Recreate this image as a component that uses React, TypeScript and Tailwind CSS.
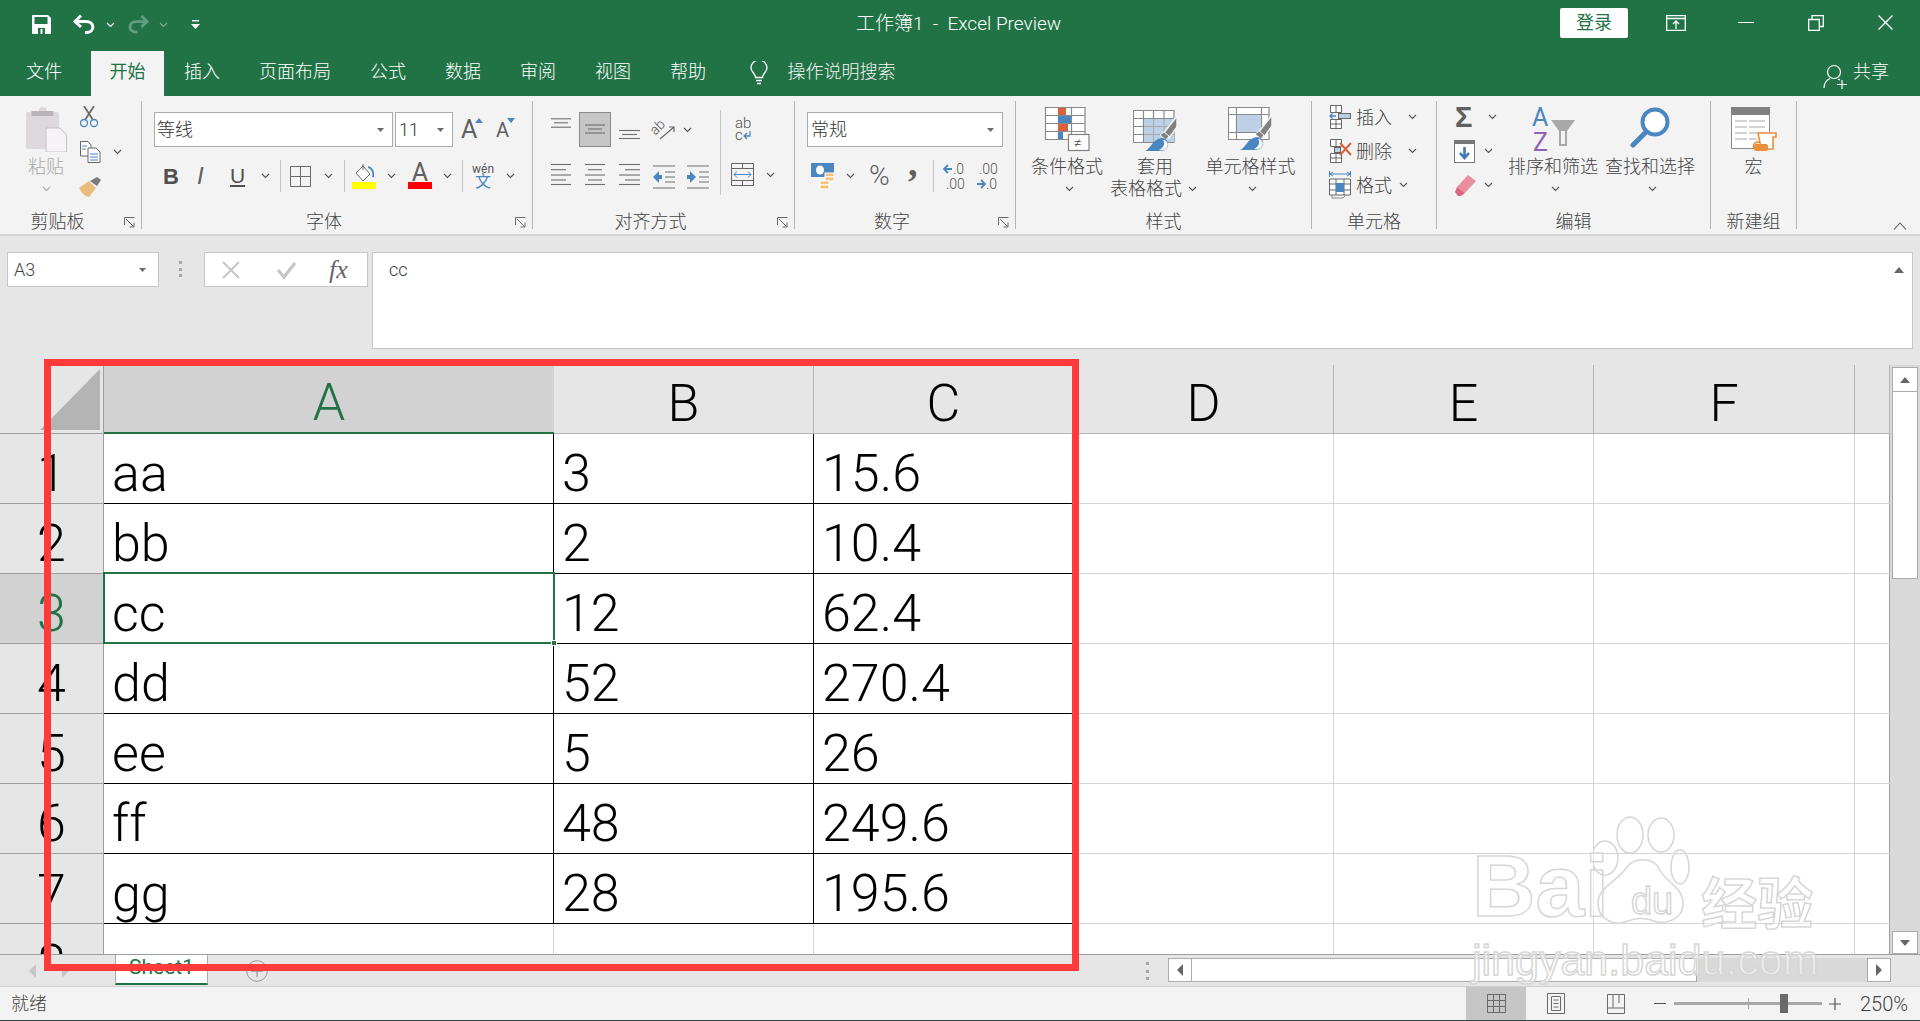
import React from "react";

const Chev = ({ c = "#555", className = "" }: { c?: string; className?: string }) => (
  <svg width="9" height="6" viewBox="0 0 9 6" className={`shrink-0 ${className}`}><polyline points="1,1 4.5,4.5 8,1" fill="none" stroke={c} strokeWidth="1.1" /></svg>
);
const Drop = () => (
  <svg width="9" height="6" viewBox="0 0 9 6" className="shrink-0"><polygon points="1,1 8,1 4.5,5" fill="#6a6a6a" /></svg>
);
const Launcher = () => (
  <svg width="11" height="11" viewBox="0 0 11 11" className="absolute right-[6px] bottom-[1px]">
    <path d="M0.5 8V0.5H10.5M2 2L9.5 9.5M5.5 10H10V5.5" fill="none" stroke="#6a6a6a" strokeWidth="1" />
  </svg>
);
const Sep = () => <div className="w-px h-[32px] bg-[#c6c6c6] shrink-0" />;

function Group({ w, label, launcher, children }: { w: string; label: string; launcher?: boolean; children: React.ReactNode }) {
  return (
    <div className={`${w} shrink-0 relative h-[128px] mt-[5px] border-r border-[#b4b4b4] flex flex-col`}>
      <div className="h-[110px] shrink-0">{children}</div>
      <div className={`h-[18px] leading-[22px] text-center text-[#444] ${launcher ? "pr-[26px]" : ""}`}>{label}</div>
      {launcher && <Launcher />}
    </div>
  );
}

const Lines = ({ w = 20, ys, xs }: { w?: number; ys: number[]; xs?: [number, number][] }) => (
  <svg width={w} height="32" viewBox={`0 0 ${w} 32`} className="shrink-0">
    {ys.map((y, i) => (
      <line key={i} x1={xs ? xs[i][0] : 0} x2={xs ? xs[i][1] : w} y1={y} y2={y} stroke="#6e6e6e" strokeWidth="1.1" />
    ))}
  </svg>
);

const SmallCol = ({ className, icon, label, label2, chev = true, labelClass = "" }: { className: string; icon: React.ReactNode; label: string; label2?: React.ReactNode; chev?: boolean; labelClass?: string }) => (
  <div className={`${className} shrink-0 flex flex-col items-center`}>
    <div className="h-[45px] mt-[6px] flex items-start">{icon}</div>
    <div className={`mt-[4px] h-[22px] leading-[22px] whitespace-nowrap text-[#444] ${labelClass}`}>{label}</div>
    {label2}
    {chev && !label2 && <Chev className="mt-[8px] ml-[4px]" />}
  </div>
);

const RowsCol = ({ children }: { children: React.ReactNode }) => <div className="flex flex-col">{children}</div>;

const Brush = ({ dx = 0, dy = 0 }: { dx?: number; dy?: number }) => (
  <g transform={`translate(${dx} ${dy})`}>
    <path d="M30 27L44 9V20L36 31Z" fill="#808080" stroke="#f3f3f3" strokeWidth="1.500" />
    <path d="M27 28L31 25 36 29 33 33Z" fill="#808080" stroke="#f3f3f3" />
    <path d="M12 44C18 42 19 32 29 31 33 31 36 35 35 39 33 43 30 44 26 44Z" fill="#4a86c0" />
    <path d="M26 43C30 41 33 37 30 33 34 33 36 37 34 40 33 42 30 44 26 43Z" fill="#fff" />
  </g>
);

const grid = ["aa", "bb", "cc", "dd", "ee", "ff", "gg"];
const b = ["3", "2", "12", "52", "5", "48", "28"];
const c = ["15.6", "10.4", "62.4", "270.4", "26", "249.6", "195.6"];

const cellText = "pl-[8px] pb-[3px] flex items-end leading-[52px] text-[52px] font-light text-black overflow-hidden";

export default function App() {
  return (
    <div className="relative w-[1920px] h-[1021px] overflow-hidden bg-[#e6e6e6] flex flex-col text-[18px] font-light font-['Roboto','Noto_Sans_CJK_SC',sans-serif]">
      {/* title bar */}
      <div className="h-[51px] shrink-0 bg-[#217346] flex items-center text-white relative">
        <svg width="19" height="19" viewBox="0 0 19 19" className="ml-[32px] -mt-[3px]">
          <path d="M1 0H16L19 3V18a1 1 0 0 1-1 1H1a1 1 0 0 1-1-1V1a1 1 0 0 1 1-1Z" fill="#fff" />
          <rect x="2.500" y="2" width="13" height="7" fill="#217346" />
          <rect x="6" y="13" width="7" height="6" fill="#217346" />
          <rect x="8.500" y="14" width="2" height="5" fill="#fff" />
        </svg>
        <svg width="23" height="20" viewBox="0 0 23 20" className="ml-[22px] -mt-[3px]">
          <path d="M8 1.500L2 7.500L8 13M2 7.500H13C22 7.500 22 18 14 18.500H12" fill="none" stroke="#fff" strokeWidth="3" />
        </svg>
        <Chev c="#fff" className="ml-[10px] -mt-[2px]" />
        <svg width="22" height="20" viewBox="0 0 23 20" className="ml-[12px] -mt-[3px] opacity-30">
          <path d="M15 1.500L21 7.500L15 13M21 7.500H10C1 7.500 1 18 9 18.500H11" fill="none" stroke="#fff" strokeWidth="3" />
        </svg>
        <Chev c="#7fb096" className="ml-[10px] -mt-[2px]" />
        <svg width="9" height="10" viewBox="0 0 9 10" className="ml-[23px] -mt-[2px]">
          <rect x="1" y="0" width="7" height="1.400" fill="#fff" /><polygon points="0,4 9,4 4.500,9" fill="#fff" />
        </svg>
        <div className="absolute left-[856px] top-[12px] whitespace-pre leading-[24px] text-[19px]">工作簿1  -  Excel Preview</div>
        <div className="ml-auto flex items-center">
          <div className="w-[68px] h-[30px] -mt-[5px] rounded-[2px] bg-white text-[#217346] text-center leading-[30px] font-normal">登录</div>
          <svg width="20" height="16" viewBox="0 0 20 16" className="ml-[38px] -mt-[6px]">
            <path d="M.7.7H19.300V15.300H.7ZM.7 3.500H19.300M10 14V6.500M7 9l3-3 3 3" fill="none" stroke="#fff" strokeWidth="1.300" />
          </svg>
          <div className="w-[16px] h-[1.500px] bg-white ml-[52px] -mt-[6px]" />
          <svg width="16" height="16" viewBox="0 0 16 16" className="ml-[54px] -mt-[6px]">
            <path d="M.7 4.500H11.300V15.300H.7ZM4 4.500V.7H15.300V11.500H11.300" fill="none" stroke="#fff" strokeWidth="1.300" />
          </svg>
          <svg width="15" height="15" viewBox="0 0 15 15" className="ml-[54px] mr-[27px] -mt-[6px]">
            <path d="M.5.5L14.500 14.500M14.500.5L.5 14.500" stroke="#fff" strokeWidth="1.400" />
          </svg>
        </div>
      </div>
      {/* tabs */}
      <div className="h-[45px] shrink-0 bg-[#217346] flex text-white pl-[7px]">
        <div className="px-[19px] mr-[10px] leading-[42px]">文件</div>
        <div className="w-[73px] bg-[#f3f3f3] text-[#217346] text-center leading-[42px] font-normal">开始</div>
        {["插入", "页面布局", "公式", "数据", "审阅", "视图", "帮助"].map((t, i) => (
          <div key={t} className={`px-[19.5px] leading-[42px] ${i === 0 ? "pl-[20px]" : ""}`}>{t}</div>
        ))}
        <svg width="18" height="24" viewBox="0 0 18 24" className="ml-[24px] mt-[10px] shrink-0">
          <path d="M5.500 16.500C5.500 12.500 1 11 1 7a8 8 0 0 1 16 0c0 4-4.500 5.500-4.500 9.500ZM6 19.500H12M7 22.500H11" fill="none" stroke="#fff" strokeWidth="1.300" />
        </svg>
        <div className="ml-[20px] leading-[42px] text-[#f3f3f3]">操作说明搜索</div>
        <div className="ml-auto mr-[31px] flex">
          <svg width="24" height="25" viewBox="0 0 24 25" className="mt-[13px]">
            <circle cx="11" cy="8" r="6.500" fill="none" stroke="#fff" strokeWidth="1.200" />
            <path d="M1 24C1 19 4 16 7 14.500M15 15L17 16M14 20.500H24M19 16V25" fill="none" stroke="#fff" strokeWidth="1.200" />
          </svg>
          <div className="ml-[6px] leading-[42px]">共享</div>
        </div>
      </div>
      {/* ribbon */}
      <div className="h-[140px] shrink-0 bg-[#f3f3f3] border-b-2 border-[#d4d4d4] flex relative">
        <Group w="w-[142px]" label="剪贴板" launcher>
          <div className="flex h-full">
            <div className="w-[78px] pl-[14px] flex flex-col items-center">
              <svg width="41" height="45" viewBox="0 0 41 45" className="mt-[6px] shrink-0">
                <path d="M2 5H13V3a4 4 0 0 1 4-3h0a4 4 0 0 1 4 3V5H31a2 2 0 0 1 2 2V40a2 2 0 0 1-2 2H2a2 2 0 0 1-2-2V7A2 2 0 0 1 2 5Z" fill="#dcd8dc" />
                <rect x="5.500" y="4" width="22" height="5" fill="#b8b4b8" />
                <path d="M20 21H34L40.500 28V45H20Z" fill="#f6f3f6" stroke="#c6c2c6" />
              </svg>
              <div className="mt-[4px] h-[22px] leading-[22px] text-[#a8a8a8]">粘贴</div>
              <Chev c="#a8a8a8" className="mt-[8px]" />
            </div>
            <div className="flex flex-col">
              <svg width="18" height="22" viewBox="0 0 18 22" className="ml-[2px] mt-[5px]">
                <path d="M4 0L13 14M14 0L5 14" stroke="#6a6a6a" strokeWidth="1.800" />
                <circle cx="4" cy="17" r="3.500" fill="none" stroke="#4a86c0" strokeWidth="1.300" />
                <circle cx="14" cy="17" r="3.500" fill="none" stroke="#4a86c0" strokeWidth="1.300" />
              </svg>
              <div className="flex items-center mt-[13px] ml-[2px] h-[22px]">
                <svg width="21" height="22" viewBox="0 0 21 22">
                  <path d="M.5.5H8L11 4V15H.5Z" fill="#fff" stroke="#666" />
                  <path d="M8 7H16L20 11V21.500H8Z" fill="#fff" stroke="#666" />
                  <path d="M2 5H7M2 8H6M10 13H18M10 16H18M10 19H18" stroke="#4a86c0" />
                </svg>
                <Chev className="ml-[12px]" />
              </div>
              <svg width="24" height="20" viewBox="0 0 24 20" className="mt-[14px]">
                <path d="M1 11L11 4L18 11L11 20C7 20 3 15 1 11Z" fill="#e9bd7d" />
                <path d="M12 4L19 0 23 3 19 9 Z" fill="#7a7a7a" />
              </svg>
            </div>
          </div>
        </Group>
        <Group w="w-[391px]" label="字体" launcher>
          <div className="flex mt-[11px] h-[35px]">
            <div className="ml-[12px] w-[239px] h-[35px] bg-white border border-[#ababab] flex items-center justify-between pl-[2px] pr-[7px] text-[#333]">
              <span>等线</span><Drop />
            </div>
            <div className="ml-[2px] w-[58px] h-[35px] bg-white border border-[#ababab] flex items-center justify-between pl-[3px] pr-[7px] text-[#333]">
              <span>11</span><Drop />
            </div>
            <div className="ml-[8px] w-[20px] relative text-[25px] leading-[35px] font-normal text-[#5f5f5f]">
              A
              <svg width="8" height="5" viewBox="0 0 8 5" className="absolute left-[14px] top-[6px]"><polygon points="0,5 8,5 4,0" fill="#4a86c0" /></svg>
            </div>
            <div className="ml-[15px] w-[20px] relative text-[20px] leading-[36px] font-normal text-[#5f5f5f]">
              A
              <svg width="8" height="5" viewBox="0 0 8 5" className="absolute left-[11px] top-[6px]"><polygon points="0,0 8,0 4,5" fill="#4a86c0" /></svg>
            </div>
          </div>
          <div className="flex items-center mt-[13px] h-[32px]">
            <span className="ml-[21px] w-[14px] text-[22px] font-bold text-[#505050] font-['Liberation_Sans',sans-serif]">B</span>
            <span className="ml-[20px] w-[11px] text-[24px] italic text-[#606060] font-['Liberation_Sans',sans-serif]">I</span>
            <span className="ml-[22px] w-[15px] text-[21px] underline font-normal text-[#505050] font-['Liberation_Sans',sans-serif]">U</span>
            <Chev className="ml-[16px]" />
            <div className="ml-[10px]"><Sep /></div>
            <svg width="21" height="21" viewBox="0 0 21 21" className="ml-[9px] shrink-0"><path d="M.5.5H20.500V20.500H.5ZM10.500.5V20.500M.5 10.500H20.500" fill="none" stroke="#6a6a6a" /></svg>
            <Chev className="ml-[13px]" />
            <div className="ml-[11px]"><Sep /></div>
            <svg width="24" height="25" viewBox="0 0 24 25" className="ml-[7px] shrink-0">
              <path d="M4 9L11 2 18 10 11 17Z" fill="#fff" stroke="#666" />
              <path d="M11 0V6" stroke="#666" />
              <path d="M16 3C20 4 22 8 21 13" fill="none" stroke="#4a86c0" strokeWidth="2" />
              <rect y="18" width="24" height="7" fill="#ffff00" />
            </svg>
            <Chev className="ml-[11px]" />
            <div className="ml-[12px] w-[24px] h-[26px] relative flex flex-col items-center shrink-0">
              <span className="text-[25px] leading-[20px] font-normal text-[#5f5f5f]">A</span>
              <div className="absolute bottom-0 w-[24px] h-[7px] bg-[#ff0000]" />
            </div>
            <Chev className="ml-[11px]" />
            <div className="ml-[10px]"><Sep /></div>
            <div className="ml-[10px] w-[20px] flex flex-col items-center shrink-0">
              <span className="text-[12px] leading-[11px] text-[#555] font-normal">wén</span>
              <span className="text-[16px] leading-[14px] text-[#4a86c0] font-normal">文</span>
            </div>
            <Chev className="ml-[13px]" />
          </div>
        </Group>
        <Group w="w-[262px]" label="对齐方式" launcher>
          <div className="flex">
            <div className="w-[187px] shrink-0">
              <div className="flex items-center mt-[11px] h-[35px]">
                <div className="ml-[18px]"><Lines ys={[4.800, 8.800, 13.200]} xs={[[0, 20], [3, 17], [0, 20]]} /></div>
                <div className="ml-[8px] w-[32px] h-[35px] bg-[#c6c6c6] border border-[#8a8a8a] flex items-center justify-center shrink-0">
                  <Lines ys={[11, 15, 19]} xs={[[0, 20], [3, 17], [0, 20]]} />
                </div>
                <div className="ml-[8px]"><Lines w={21} ys={[16.500, 20.500, 24.500]} xs={[[0, 21], [3, 18], [0, 21]]} /></div>
                <svg width="21" height="20" viewBox="0 0 21 20" className="ml-[14px] shrink-0 overflow-visible">
                  <text x="0" y="13" fontSize="14" fill="#555" transform="rotate(-45 4 13)" fontFamily="Roboto">ab</text>
                  <path d="M6 19L20 7M15 7H20V12" fill="none" stroke="#666" strokeWidth="1.200" />
                </svg>
                <Chev className="ml-[8px]" />
              </div>
              <div className="flex items-center mt-[13px] h-[32px]">
                <div className="ml-[18px]"><Lines ys={[4.500, 9.700, 15, 20, 24.500]} xs={[[0, 20], [0, 15], [0, 20], [0, 15], [0, 20]]} /></div>
                <div className="ml-[14px]"><Lines ys={[4.500, 9.700, 15, 20, 24.500]} xs={[[0, 20], [3, 17], [0, 20], [3, 17], [0, 20]]} /></div>
                <div className="ml-[14px]"><Lines w={21} ys={[4.500, 9.700, 15, 20, 24.500]} xs={[[0, 21], [6, 21], [0, 21], [6, 21], [0, 21]]} /></div>
                <svg width="22" height="26" viewBox="0 0 22 26" className="ml-[13px] shrink-0">
                  <path d="M0 3H22M12 9H22M12 14H22M12 19H22M0 25H22" stroke="#6e6e6e" />
                  <path d="M0 14L6 8V12H9V16H6V20Z" fill="#4a86c0" />
                </svg>
                <svg width="22" height="26" viewBox="0 0 22 26" className="ml-[12px] shrink-0">
                  <path d="M0 3H22M12 9H22M12 14H22M12 19H22M0 25H22" stroke="#6e6e6e" />
                  <path d="M9 14L3 8V12H0V16H3V20Z" fill="#4a86c0" />
                </svg>
              </div>
            </div>
            <div className="w-px h-[85px] bg-[#c6c6c6] mt-[9px] shrink-0" />
            <div className="flex flex-col">
              <svg width="18" height="24" viewBox="0 0 18 24" className="ml-[14px] mt-[16px] overflow-visible">
                <text x="0" y="11" fontSize="15" fill="#555" fontFamily="Roboto">ab</text>
                <text x="0" y="23" fontSize="15" fill="#555" fontFamily="Roboto">c</text>
                <path d="M15 14V19H9M12 16L9 19 12 22" fill="none" stroke="#4a86c0" strokeWidth="1.300" />
              </svg>
              <div className="flex items-center mt-[22px] ml-[10px]">
                <svg width="23" height="23" viewBox="0 0 23 23">
                  <path d="M.5.5H22.500V22.500H.5ZM.5 5.500H22.500M.5 17.500H22.500M11.500.5V5.500M11.500 17.500V22.500" fill="none" stroke="#666" />
                  <path d="M3 11.500H20M6 8.500L3 11.500 6 14.500M17 8.500L20 11.500 17 14.500" fill="none" stroke="#4a86c0" />
                </svg>
                <Chev className="ml-[12px]" />
              </div>
            </div>
          </div>
        </Group>
        <Group w="w-[221px]" label="数字" launcher>
          <div className="mt-[11px] ml-[12px] w-[196px] h-[35px] bg-white border border-[#ababab] flex items-center justify-between pl-[3px] pr-[7px] text-[#333]">
            <span>常规</span><Drop />
          </div>
          <div className="flex items-center mt-[13px] h-[32px]">
            <svg width="23" height="27" viewBox="0 0 23 27" className="ml-[16px] shrink-0">
              <rect x="0" y="0" width="23" height="14" fill="#4a86c0" />
              <ellipse cx="9" cy="7" rx="4" ry="4.500" fill="#fff" />
              <rect x="14" y="10" width="9" height="4" fill="#f3c27c" stroke="#fff" />
              <rect x="14" y="14" width="9" height="4" fill="#f3c27c" stroke="#fff" />
              <rect x="9" y="18" width="9" height="4" fill="#f3c27c" stroke="#fff" />
              <rect x="9" y="22" width="9" height="4" fill="#f3c27c" stroke="#fff" />
            </svg>
            <Chev className="ml-[12px]" />
            <span className="ml-[14px] w-[20px] text-[28px] font-light text-[#5f5f5f] leading-[32px]">%</span>
            <span className="ml-[19px] w-[10px] text-[38px] font-bold text-[#5f5f5f] leading-[32px] -translate-y-[13px] font-['Liberation_Serif',serif]">,</span>
            <div className="ml-[15px]"><Sep /></div>
            <svg width="25" height="30" viewBox="0 0 25 30" className="ml-[9px] shrink-0 overflow-visible">
              <path d="M1 8H9M5 4L1 8 5 12" fill="none" stroke="#4a86c0" strokeWidth="1.800" />
              <text x="10" y="13" fontSize="14" fill="#555" fontFamily="Roboto">.0</text>
              <text x="3" y="28" fontSize="14" fill="#555" fontFamily="Roboto">.00</text>
            </svg>
            <svg width="25" height="30" viewBox="0 0 25 30" className="ml-[8px] shrink-0 overflow-visible">
              <text x="3" y="13" fontSize="14" fill="#555" fontFamily="Roboto">.00</text>
              <path d="M1 23H9M5 19L9 23 5 27" fill="none" stroke="#4a86c0" strokeWidth="1.800" />
              <text x="10" y="28" fontSize="14" fill="#555" fontFamily="Roboto">.0</text>
            </svg>
          </div>
        </Group>
        <Group w="w-[296px]" label="样式">
          <div className="flex">
            <SmallCol
              className="ml-[15px] w-[72px]"
              icon={
                <svg width="45" height="45" viewBox="0 0 45 45" className="overflow-visible">
                  <path d="M.5.5H40V32.500H.5ZM.5 8.500H40M.5 16.500H40M.5 24.500H40M13.500.5V32.500M26.500.5V32.500" fill="#fff" stroke="#8a8a8a" strokeWidth="1.200" />
                  <rect x="13" y="1" width="8" height="7" fill="#d9623e" />
                  <rect x="13" y="9" width="13" height="7" fill="#4a86c0" />
                  <rect x="13" y="17" width="10" height="7" fill="#d9623e" />
                  <rect x="13" y="25" width="5" height="7" fill="#4a86c0" />
                  <rect x="23.500" y="27.500" width="20.500" height="16" fill="#fff" stroke="#808080" strokeWidth="1.200" />
                  <text x="28.500" y="41" fontSize="15" fill="#444" fontFamily="Roboto">≠</text>
                </svg>
              }
              label="条件格式"
            />
            <SmallCol
              className="ml-[6px] w-[89px]"
              labelClass="ml-[3px]"
              icon={
                <svg width="46" height="45" viewBox="0 0 46 45" className="ml-[5px]">
                  <path d="M.5 3.500H41V35.500H.5ZM.5 11.500H41M.5 19.500H41M.5 27.500H41M10.500 3.500V35.500M20.500 3.500V35.500M31 3.500V35.500" fill="#fff" stroke="#8a8a8a" strokeWidth="1.200" />
                  <rect x="11" y="12" width="30" height="23" fill="#bcd0e6" />
                  <path d="M11 19.500H41M11 27.500H41M20.500 12V35M31 12V35" stroke="#a8a8a8" />
                  <Brush />
                </svg>
              }
              label="套用"
              label2={
                <div className="h-[22px] leading-[22px] whitespace-nowrap flex items-center gap-[6px] text-[#444]">
                  表格格式<Chev />
                </div>
              }
            />
            <SmallCol
              className="ml-[8px] w-[89px]"
              icon={
                <svg width="46" height="45" viewBox="0 0 46 45">
                  <path d="M.5.5H41V32.500H.5ZM.5 7.500H41M.5 25.500H41M8.500.5V32.500M33.500.5V32.500" fill="#fff" stroke="#8a8a8a" strokeWidth="1.200" />
                  <rect x="9" y="8" width="24" height="17" fill="#bcd0e6" />
                  <Brush dy={-1} />
                </svg>
              }
              label="单元格样式"
            />
          </div>
        </Group>
        <Group w="w-[125px]" label="单元格">
          <RowsCol>
            <div className="flex items-center h-[34px] -mt-[1px]">
              <svg width="22" height="24" viewBox="0 0 22 24" className="ml-[17px] shrink-0">
                <path d="M1.500.5H12.500V7.500H1.500ZM7 .5V7.500M1.500 14.500H12.500V23.500H1.500ZM1.500 19H12.500M7 14.500V23.500" fill="#fff" stroke="#666" />
                <rect x="9.500" y="8.500" width="12" height="5" fill="#b9cfe6" stroke="#666" />
                <path d="M7 11H1M3.500 8.500L1 11 3.500 13.500" fill="none" stroke="#4a86c0" strokeWidth="1.400" />
              </svg>
              <span className="ml-[5px] w-[36px] text-[#444]">插入</span>
              <Chev className="ml-[16px]" />
            </div>
            <div className="flex items-center h-[34px]">
              <svg width="23" height="24" viewBox="0 0 23 24" className="ml-[17px] shrink-0">
                <path d="M1.500.5H12.500V7.500H1.500ZM7 .5V7.500M1.500 14.500H12.500V23.500H1.500ZM1.500 19H12.500M7 14.500V23.500" fill="#fff" stroke="#666" />
                <rect x="5.500" y="8.500" width="6" height="5" fill="#b9cfe6" stroke="#666" />
                <path d="M11 4L22 16M22 4L11 16" stroke="#d9623e" strokeWidth="2" />
              </svg>
              <span className="ml-[4px] w-[36px] text-[#444]">删除</span>
              <Chev className="ml-[16px]" />
            </div>
            <div className="flex items-center h-[34px]">
              <svg width="22" height="28" viewBox="0 0 22 28" className="ml-[17px] shrink-0">
                <path d="M1 3H21M4 1L1 3 4 5M18 1L21 3 18 5M.5 0V6M21.500 0V6" fill="none" stroke="#4a86c0" strokeWidth="1" />
                <path d="M.5 8H21.500V24H.5ZM.5 13H21.500M.5 19H21.500M7 8V24M15 8V24" fill="#fff" stroke="#666" />
                <rect x="7" y="12" width="8" height="9" fill="#4a86c0" />
                <path d="M3 24V27H14L17 24" fill="none" stroke="#888" />
              </svg>
              <span className="ml-[5px] w-[36px] text-[#444]">格式</span>
              <Chev className="ml-[7px]" />
            </div>
          </RowsCol>
        </Group>
        <Group w="w-[274px]" label="编辑">
          <div className="flex">
            <div className="w-[71px] shrink-0 flex flex-col">
              <div className="flex items-center h-[34px] -mt-[1px]">
                <span className="ml-[18px] w-[20px] text-[29px] leading-[32px] font-bold text-[#606060] font-['Liberation_Sans',sans-serif]">Σ</span>
                <Chev className="ml-[13px]" />
              </div>
              <div className="flex items-center h-[34px]">
                <svg width="21" height="23" viewBox="0 0 21 23" className="ml-[17px] shrink-0">
                  <rect x=".5" y=".5" width="20" height="22" fill="#fff" stroke="#777" />
                  <rect width="21" height="4" fill="#777" />
                  <path d="M10.500 7V18M6 13L10.500 18 15 13" fill="none" stroke="#3f78b4" strokeWidth="2.600" />
                </svg>
                <Chev className="ml-[9px]" />
              </div>
              <div className="flex items-center h-[34px]">
                <svg width="21" height="21" viewBox="0 0 21 21" className="ml-[18px] shrink-0">
                  <path d="M13 0L21 6 10 18 2 12Z" fill="#ea8d9e" />
                  <path d="M2 12L10 18 6 21 3 21 0 17 Z" fill="#d9677f" />
                </svg>
                <Chev className="ml-[8px]" />
              </div>
            </div>
            <SmallCol
              className="w-[90px]"
              icon={
                <svg width="43" height="45" viewBox="0 0 43 45" className="overflow-visible">
                  <text x="0" y="19" fontSize="25" fill="#4a86c0" fontFamily="Roboto" fontWeight="400">A</text>
                  <text x="1" y="44" fontSize="25" fill="#8e62b4" fontFamily="Roboto" fontWeight="400">Z</text>
                  <path d="M19 13H43L35 24V39H27V24Z" fill="#a8a8a8" />
                  <path d="M29 24V37H33V24Z" fill="#f3f3f3" />
                </svg>
              }
              label="排序和筛选"
            />
            <SmallCol
              className="ml-[7px] w-[90px]"
              icon={
                <svg width="41" height="41" viewBox="0 0 41 41">
                  <circle cx="25" cy="15" r="12.500" fill="#fff" stroke="#4a86c0" strokeWidth="4" />
                  <path d="M16 25L3 38" stroke="#4a86c0" strokeWidth="5" strokeLinecap="round" />
                </svg>
              }
              label="查找和选择"
            />
          </div>
        </Group>
        <Group w="w-[86px]" label="新建组">
          <SmallCol
            className="w-full"
            chev={false}
            icon={
              <svg width="46" height="44" viewBox="0 0 46 44">
                <rect x=".5" y=".5" width="38" height="41" fill="#fff" stroke="#8a8a8a" />
                <rect width="39" height="8" fill="#808080" />
                <path d="M4 14H16M18 14H34M4 20H16M18 20H34M4 26H16M18 26H34M4 32H16M18 32H26" stroke="#a8a8a8" />
                <path d="M27 26H45V30H42V42H24A3 3 0 0 1 29 36Z" fill="#fff" stroke="#ea8f3c" strokeWidth="1.600" />
                <rect x="23" y="37" width="14" height="7" rx="2" fill="#ea8f3c" />
              </svg>
            }
            label="宏"
          />
        </Group>
        <svg width="14" height="8" viewBox="0 0 14 8" className="absolute right-[13px] top-[126px]"><polyline points="1,7.500 7,1 13,7.500" fill="none" stroke="#555" strokeWidth="1.100" /></svg>
      </div>
      {/* formula bar */}
      <div className="h-[129px] shrink-0 flex items-start pt-[16px] pl-[7px] bg-[#e6e6e6]">
        <div className="w-[152px] h-[35px] bg-white border border-[#c6c6c6] flex items-center justify-between pl-[6px] pr-[11px] text-[#444]">
          <span>A3</span><Drop />
        </div>
        <div className="ml-[20px] w-[4px] h-[16px] mt-[9px] flex flex-col justify-between">
          <div className="w-[3px] h-[3px] bg-[#a8a8a8]" /><div className="w-[3px] h-[3px] bg-[#a8a8a8]" /><div className="w-[3px] h-[3px] bg-[#a8a8a8]" />
        </div>
        <div className="ml-[21px] w-[164px] h-[35px] bg-white border border-[#c6c6c6] flex items-center">
          <svg width="18" height="18" viewBox="0 0 18 18" className="ml-[17px]"><path d="M1 1L17 17M17 1L1 17" stroke="#c6c6c6" strokeWidth="2" /></svg>
          <svg width="19" height="18" viewBox="0 0 19 18" className="ml-[37px]"><path d="M1 9L7 16 18 2" fill="none" stroke="#c6c6c6" strokeWidth="3.200" /></svg>
          <span className="ml-[33px] text-[26px] leading-[30px] italic font-normal text-[#666] font-['Liberation_Serif',serif]">fx</span>
        </div>
        <div className="ml-[4px] w-[1541px] h-[97px] bg-white border border-[#c6c6c6] pl-[16px] pt-[3px] relative text-[#333]">
          cc
          <svg width="10" height="6" viewBox="0 0 10 6" className="absolute right-[8px] top-[14px]"><polygon points="0,6 10,6 5,0" fill="#666" /></svg>
        </div>
      </div>
      {/* sheet */}
      <div className="h-[589px] shrink-0 flex overflow-hidden">
        <div className="w-[1890px] shrink-0 bg-white grid grid-cols-[104px_450px_260px_260px_260px_260px_261px_35px] grid-rows-[69px_repeat(8,70px)] border-r border-[#9e9e9e]">
          <div className="bg-[#e6e6e6] border-r border-b border-[#9e9e9e] flex items-end justify-end p-[3px]">
            <svg width="60" height="61" viewBox="0 0 60 61"><polygon points="60,0 60,61 0,61" fill="#b4b4b4" /></svg>
          </div>
          {["A", "B", "C", "D", "E", "F", ""].map((h, i) => (
            <div
              key={i}
              className={`flex items-end justify-center pb-[3px] text-[52px] leading-[52px] font-light ${
                i === 0 ? "bg-[#d2d2d2] text-[#217346] border-b-2 border-[#217346]" : "bg-[#e6e6e6] text-black border-r border-b border-[#b4b4b4]"
              }`}
            >
              {h}
            </div>
          ))}
          {Array.from({ length: 8 }).map((_, r) => {
            const hasData = r < 7;
            const line = hasData ? "border-b border-black" : "border-b border-[#d4d4d4]";
            const vline = hasData ? "border-r border-black" : "border-r border-[#d4d4d4]";
            return (
              <React.Fragment key={r}>
                <div className={`flex items-end justify-center pb-[3px] text-[52px] leading-[52px] font-light border-r border-b border-[#9e9e9e] ${r === 2 ? "bg-[#d2d2d2] text-[#217346]" : "bg-[#e6e6e6] text-black"}`}>
                  {r + 1}
                </div>
                <div className={`${cellText} ${line} ${vline} relative`}>
                  {hasData && grid[r]}
                </div>
                <div className={`${cellText} ${line} ${vline}`}>{hasData && b[r]}</div>
                <div className={`${cellText} ${line} ${vline}`}>{hasData && c[r]}</div>
                <div className="border-r border-b border-[#d4d4d4]" />
                <div className="border-r border-b border-[#d4d4d4]" />
                <div className="border-r border-b border-[#d4d4d4]" />
                <div className="border-b border-[#d4d4d4]" />
              </React.Fragment>
            );
          })}
        </div>
        <div className="w-[30px] shrink-0 bg-[#d9d9d9] flex flex-col items-center pt-[2px]">
          <div className="w-[26px] h-[25px] bg-white border border-[#ababab] flex items-center justify-center">
            <svg width="10" height="6" viewBox="0 0 10 6"><polygon points="0,6 10,6 5,0" fill="#666" /></svg>
          </div>
          <div className="w-[26px] h-[187px] bg-white border border-[#ababab] border-t-0" />
          <div className="flex-1" />
          <div className="w-[26px] h-[23px] bg-white border border-[#ababab] flex items-center justify-center">
            <svg width="10" height="6" viewBox="0 0 10 6"><polygon points="0,0 10,0 5,6" fill="#666" /></svg>
          </div>
        </div>
      </div>
      {/* sheet tabs */}
      <div className="h-[33px] shrink-0 border-t border-[#9e9e9e] border-b border-b-[#d0d0d0] bg-[#e6e6e6] flex">
        <svg width="7" height="14" viewBox="0 0 7 14" className="ml-[29px] mt-[9px]"><polygon points="7,0 7,14 0,7" fill="#c6c6c6" /></svg>
        <svg width="7" height="14" viewBox="0 0 7 14" className="ml-[26px] mt-[9px]"><polygon points="0,0 0,14 7,7" fill="#c6c6c6" /></svg>
        <div className="ml-[46px] w-[93px] h-[30px] bg-white border-l border-r border-[#ababab] border-b-2 border-b-[#217346] text-center text-[#217346] text-[21px] font-normal leading-[24px]">Sheet1</div>
        <svg width="22" height="22" viewBox="0 0 22 22" className="ml-[38px] mt-[5px] shrink-0">
          <circle cx="11" cy="11" r="10.300" fill="none" stroke="#9a9a9a" />
          <path d="M11 5V17M5 11H17" stroke="#9a9a9a" strokeWidth="1.300" />
        </svg>
        <div className="flex-1" />
        <div className="w-[4px] h-[18px] mt-[7px] flex flex-col justify-between">
          <div className="w-[3px] h-[3px] bg-[#a8a8a8]" /><div className="w-[3px] h-[3px] bg-[#a8a8a8]" /><div className="w-[3px] h-[3px] bg-[#a8a8a8]" />
        </div>
        <div className="ml-[18px] w-[24px] h-[24px] mt-[3px] bg-white border border-[#ababab] flex items-center justify-center">
          <svg width="6" height="12" viewBox="0 0 6 12"><polygon points="6,0 6,12 0,6" fill="#666" /></svg>
        </div>
        <div className="w-[505px] h-[24px] mt-[3px] bg-white border border-l-0 border-[#ababab]" />
        <div className="w-[170px] h-[24px] mt-[3px] bg-[#d9d9d9]" />
        <div className="w-[24px] h-[24px] mt-[3px] bg-white border border-[#ababab] flex items-center justify-center">
          <svg width="6" height="12" viewBox="0 0 6 12"><polygon points="0,0 0,12 6,6" fill="#666" /></svg>
        </div>
        <div className="w-[29px] shrink-0" />
      </div>
      {/* status */}
      <div className="h-[34px] shrink-0 bg-[#f3f3f3] border-b border-[#2b4a4a] flex items-center text-[#444]">
        <span className="ml-[11px]">就绪</span>
        <div className="ml-auto flex items-center h-full">
          <div className="w-[60px] h-full bg-[#c6c6c6] flex items-center justify-center">
            <svg width="19" height="19" viewBox="0 0 19 19"><path d="M.5.5H18.500V18.500H.5ZM.5 6.500H18.500M.5 12.500H18.500M6.500.5V18.500M12.500.5V18.500" fill="none" stroke="#6a6a6a" /></svg>
          </div>
          <div className="w-[60px] flex justify-center">
            <svg width="18" height="21" viewBox="0 0 18 21"><path d="M.5.5H17.500V20.500H.5Z" fill="none" stroke="#6a6a6a" /><path d="M4.500 3.500H13.500V17.500H4.500ZM6.500 7H11.500M6.500 10.500H11.500M6.500 14H11.500" fill="none" stroke="#6a6a6a" /></svg>
          </div>
          <div className="w-[60px] flex justify-center">
            <svg width="18" height="20" viewBox="0 0 18 20"><path d="M.5.5H17.500V19.500H.5ZM.5 14H17.500M6 .5V14M12 .5V9" fill="none" stroke="#6a6a6a" /></svg>
          </div>
          <div className="ml-[8px] w-[12px] h-[1.500px] bg-[#555]" />
          <div className="ml-[8px] w-[148px] h-[3px] bg-[#a8a8a8] relative">
            <div className="absolute left-[74px] -top-[4px] w-px h-[11px] bg-[#a8a8a8]" />
            <div className="absolute left-[106px] -top-[8px] w-[8px] h-[19px] bg-[#6a6a6a]" />
          </div>
          <svg width="12" height="12" viewBox="0 0 12 12" className="ml-[7px]"><path d="M6 0V12M0 6H12" stroke="#555" strokeWidth="1.200" /></svg>
          <span className="ml-[19px] w-[60px] whitespace-nowrap text-[20px]">250%</span>
        </div>
      </div>
      {/* selection */}
      <div className="absolute left-[103px] top-[572px] w-[452px] h-[72px] border-2 border-[#217346] pointer-events-none">
        <div className="absolute -right-[4px] -bottom-[4px] w-[6px] h-[6px] bg-[#217346] border border-white" />
      </div>
      {/* watermark */}
      <div className="absolute left-[1470px] top-[815px] w-[360px] h-[170px] pointer-events-none select-none font-bold font-['Liberation_Sans',sans-serif] text-white/50 [-webkit-text-stroke:1.5px_#d6d6d6]">
        <div className="flex items-end h-[115px] leading-[88px]">
          <span className="text-[88px] leading-[88px] ml-[2px]">Bai</span>
          <span className="text-[38px] ml-[22px] mb-[10px] font-normal leading-[38px]">du</span>
          <span className="text-[56px] ml-[28px] leading-[60px] font-['Noto_Sans_CJK_SC',sans-serif]">经验</span>
        </div>
        <svg width="96" height="112" viewBox="0 0 96 112" className="absolute left-[124px] top-0">
          <g fill="none" stroke="#d6d6d6" strokeWidth="1.500">
            <ellipse cx="11" cy="43" rx="13" ry="17" />
            <ellipse cx="36" cy="20" rx="13" ry="18" />
            <ellipse cx="67" cy="20" rx="13" ry="17" />
            <ellipse cx="86" cy="52" rx="9" ry="17" />
            <path d="M4 88C4 72 24 66 33 52 40 42 60 42 65 54 72 68 90 72 89 90 88 105 70 110 60 106 52 103 42 103 34 106 20 112 4 104 4 88Z" />
          </g>
        </svg>
        <div className="mt-[5px] ml-[2px] text-[43px] leading-[50px] font-normal whitespace-nowrap">jingyan.baidu.com</div>
      </div>
      {/* red annotation */}
      <div className="absolute left-[44px] top-[359px] w-[1035px] h-[612px] border-[7px] border-[#fe3a3b] pointer-events-none" />
    </div>
  );
}
